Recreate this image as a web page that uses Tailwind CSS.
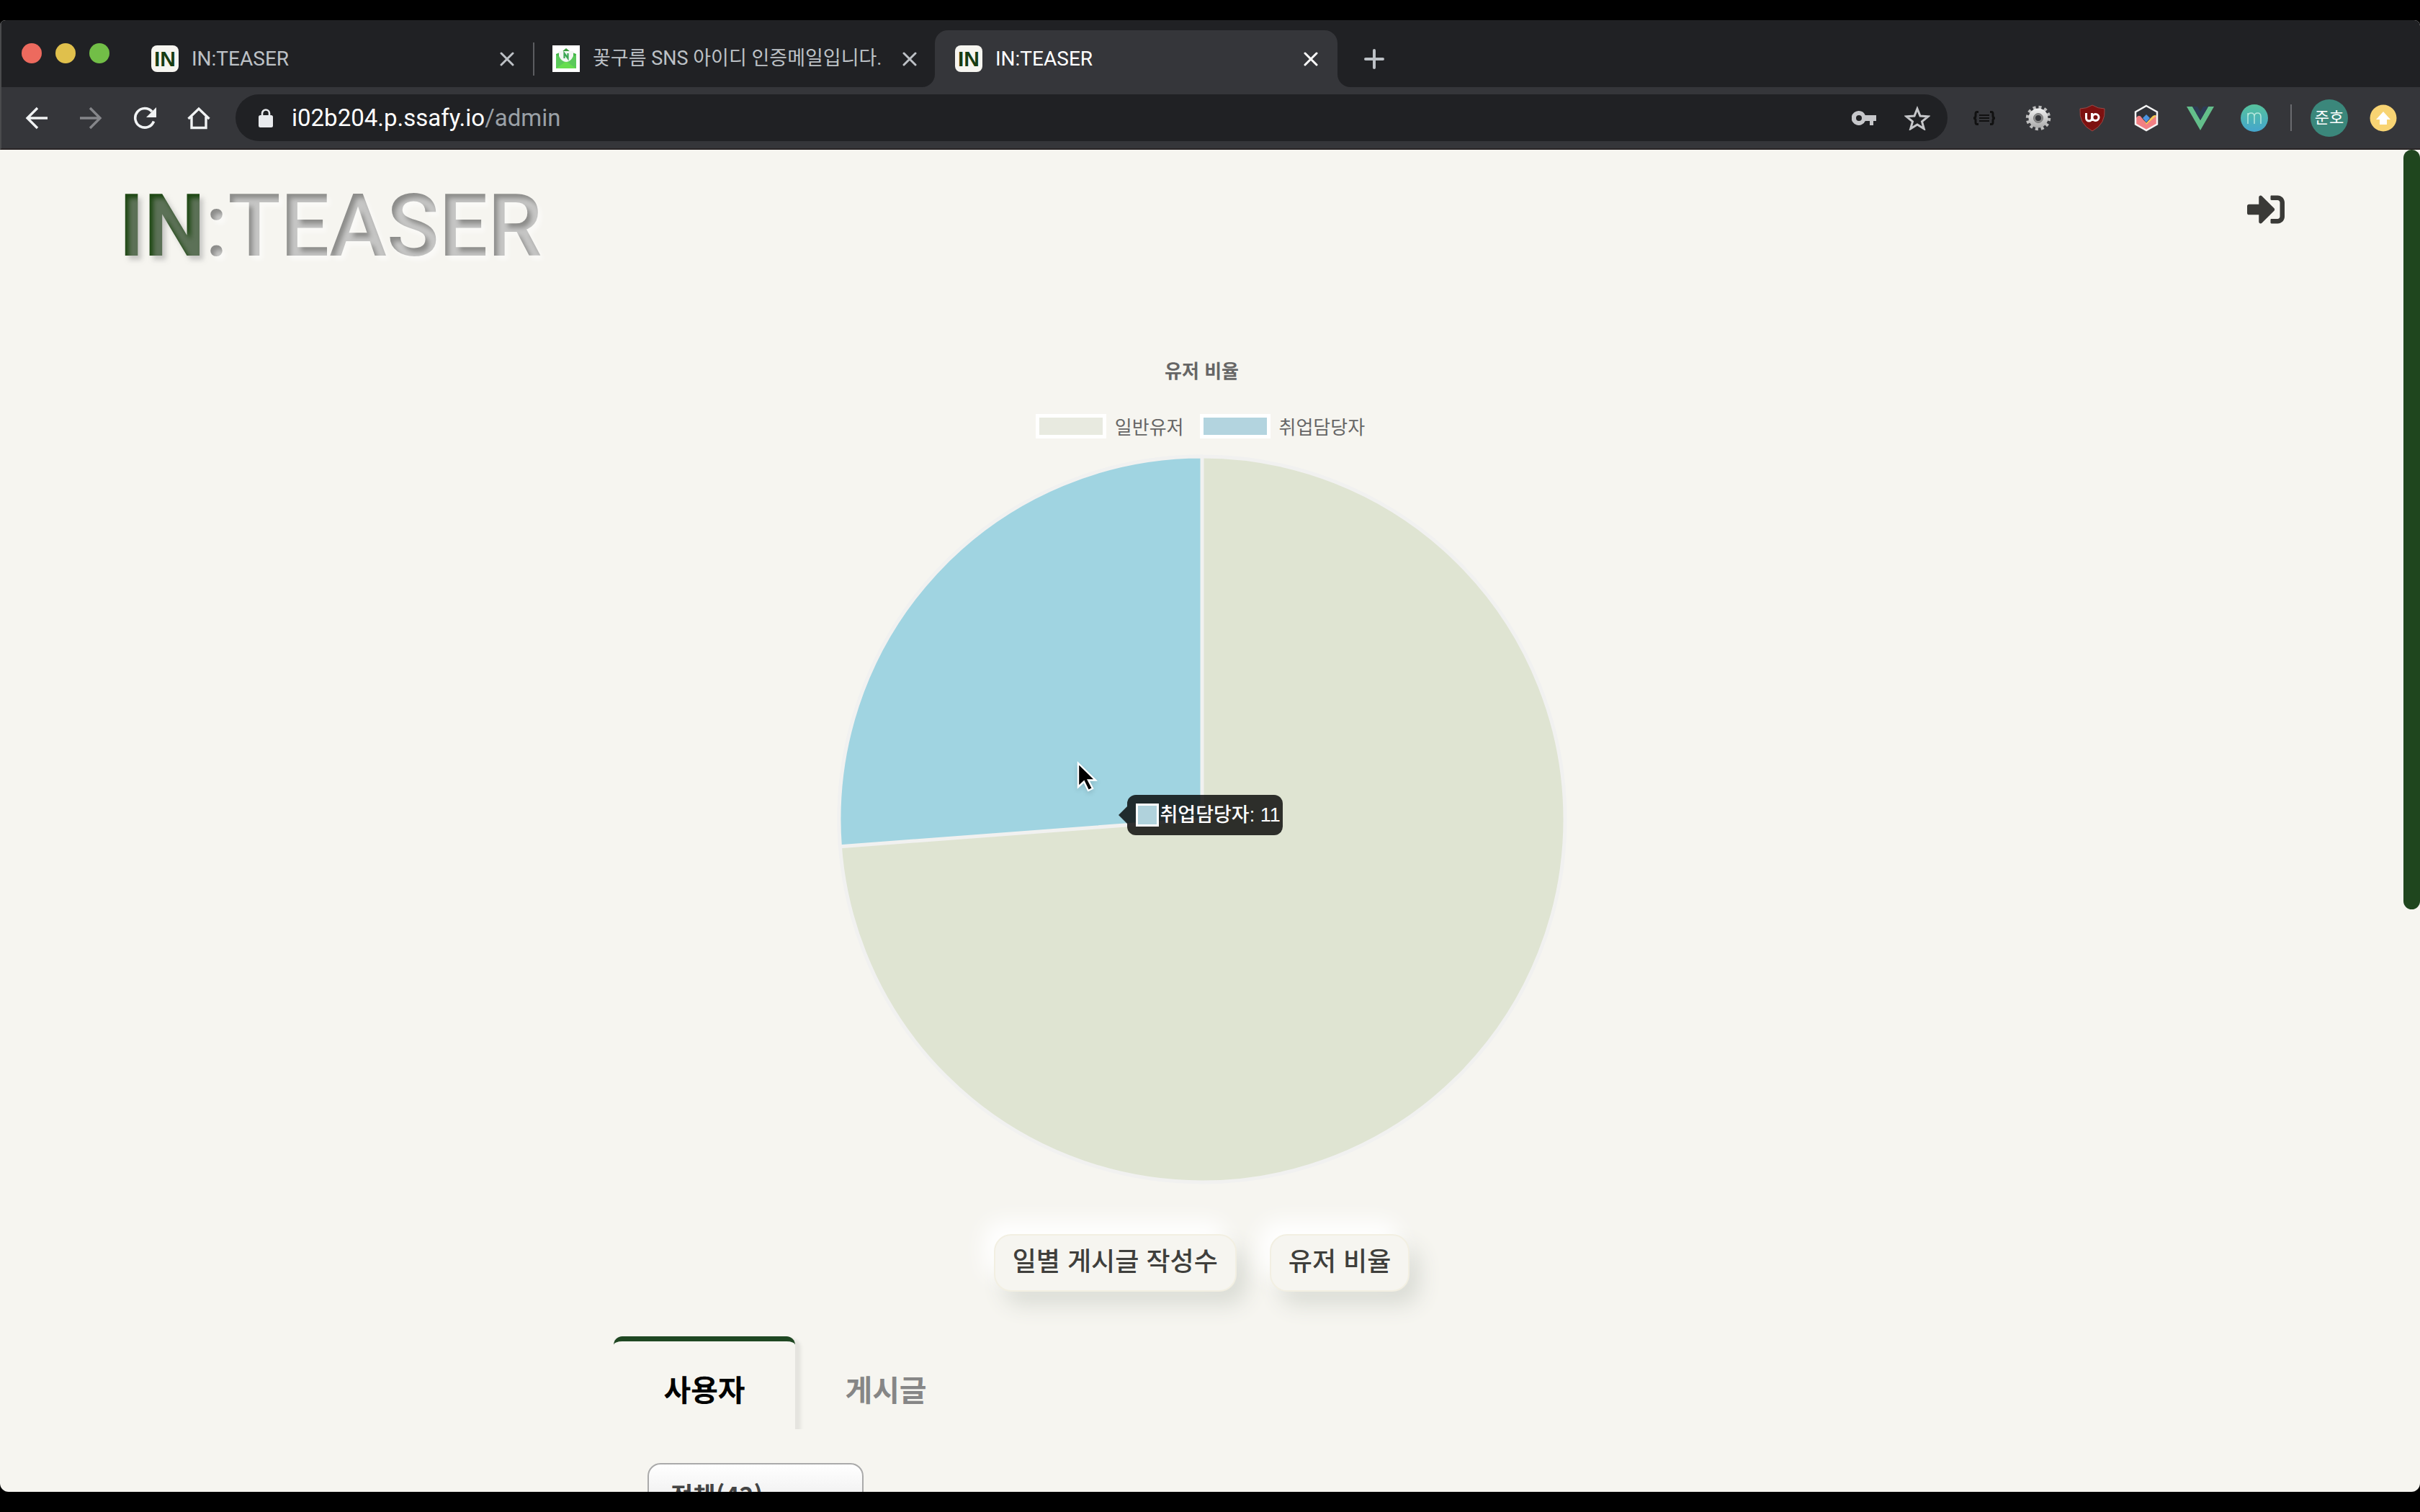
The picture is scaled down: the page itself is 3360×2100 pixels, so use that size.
<!DOCTYPE html>
<html lang="ko">
<head>
<meta charset="utf-8">
<title>IN:TEASER</title>
<script src="https://cdn.jsdelivr.net/npm/@tailwindcss/browser@4"></script>
</head>
<body class="bg-black font-['Roboto','Noto_Sans_CJK_KR',sans-serif]">
<div class="h-screen py-7">
<div class="flex h-full flex-col overflow-hidden rounded-t-lg rounded-b-xl bg-[#f6f5f0]">

  <!-- Tab strip -->
  <div class="flex h-[93px] shrink-0 items-end border-l-2 border-[#4a4b4d] bg-[#202124]">
    <div class="flex h-[95px] items-center gap-[19px] pl-7">
      <button aria-label="닫기" class="size-7 rounded-full bg-[#ed6a5e]"></button>
      <button aria-label="최소화" class="size-7 rounded-full bg-[#e0c04c]"></button>
      <button aria-label="최대화" class="size-7 rounded-full bg-[#72be47]"></button>
    </div>
    <div class="ml-[58px] flex h-[79px] w-[532px] items-center text-[28px] text-[#bdc1c6]">
      <span class="flex h-[37px] w-[38px] shrink-0 items-center justify-center rounded-lg bg-[#f6f5f0] font-['Liberation_Sans',sans-serif] text-3xl font-bold text-[#163c12]">IN</span>
      <a href="#" class="ml-[18px] flex-1">IN:TEASER</a>
      <button aria-label="탭 닫기" class="mr-[26px]"><svg class="size-5" viewBox="0 0 20 20" stroke="currentColor" stroke-width="3" stroke-linecap="round"><path d="M2 2 18 18M18 2 2 18"/></svg></button>
      <span class="h-[46px] w-[2px] bg-[#5b5c60]"></span>
    </div>
    <div class="flex h-[79px] w-[556px] items-center pl-[25px] text-[27px] text-[#bdc1c6]">
      <svg class="h-[37px] w-[38px] shrink-0" viewBox="0 0 38 37"><path fill="#fff" d="M0 0h38v37H0z"/><path fill="#3a9b3c" d="m19 4 6 5v5H13V9z"/><path fill="#45b649" d="m5 12 5-2h18l5 2v20H5z"/><path fill="#5ac95a" d="m5 13 14 10L5 32zM33 13 19 23l14 9z"/><path fill="#66dd4e" d="m5 32 14-10 14 10z"/><path fill="#f3f6f3" d="M9 8h20v7q-4 8-10 8T9 15z"/><path fill="none" stroke="#3ba653" stroke-width="2.200" d="M16.500 18v-7l5 7v-7"/></svg>
      <a href="#" class="ml-[18px] flex-1 whitespace-nowrap">꽃구름 SNS 아이디 인증메일입니다.</a>
      <button aria-label="탭 닫기" class="mr-[25px]"><svg class="size-5" viewBox="0 0 20 20" stroke="currentColor" stroke-width="3" stroke-linecap="round"><path d="M2 2 18 18M18 2 2 18"/></svg></button>
    </div>
    <div class="relative flex h-[79px] w-[559px] items-center rounded-t-[18px] bg-[#35363a] pr-[27px] pl-7 text-[28px] text-white">
      <svg class="absolute bottom-0 -left-[18px] size-[18px]" viewBox="0 0 18 18"><path fill="#35363a" d="M18 0v18H0A18 18 0 0 0 18 0z"/></svg>
      <svg class="absolute -right-[18px] bottom-0 size-[18px]" viewBox="0 0 18 18"><path fill="#35363a" d="M0 0v18h18A18 18 0 0 1 0 0z"/></svg>
      <span class="flex h-[37px] w-[38px] shrink-0 items-center justify-center rounded-lg bg-[#f6f5f0] font-['Liberation_Sans',sans-serif] text-3xl font-bold text-[#163c12]">IN</span>
      <a href="#" class="ml-[18px] flex-1">IN:TEASER</a>
      <button aria-label="탭 닫기"><svg class="size-5" viewBox="0 0 20 20" stroke="currentColor" stroke-width="3" stroke-linecap="round"><path d="M2 2 18 18M18 2 2 18"/></svg></button>
    </div>
    <button aria-label="새 탭" class="ml-[37px] flex h-[79px] items-center text-[#bdc1c6]"><svg class="size-7" viewBox="0 0 28 28" stroke="currentColor" stroke-width="4" stroke-linecap="round"><path d="M14 2v24M2 14h24"/></svg></button>
  </div>

  <!-- Toolbar -->
  <div class="flex h-[87px] shrink-0 items-center border-b-2 border-l-2 border-b-[#2a2627] border-l-[#4a4b4d] bg-[#35363a] pr-8 pl-[33px] text-[#f1f3f4]">
    <div class="flex gap-[43px]">
      <button aria-label="뒤로"><svg class="size-8" viewBox="0 0 32 32" fill="none" stroke="currentColor" stroke-width="3.400"><path d="M31 16H4M17 2 3 16l14 14"/></svg></button>
      <button aria-label="앞으로" class="text-[#85868a]"><svg class="size-8" viewBox="0 0 32 32" fill="none" stroke="currentColor" stroke-width="3.400"><path d="M1 16h27M15 2l14 14-14 14"/></svg></button>
      <button aria-label="새로고침"><svg class="size-8" viewBox="0 0 32 32"><path fill="none" stroke="currentColor" stroke-width="3.600" d="M28.500 20.500A13.300 13.300 0 1 1 26 7"/><path fill="currentColor" d="M32 1v14H18z"/></svg></button>
      <button aria-label="홈"><svg class="size-8" viewBox="0 0 32 32" fill="none" stroke="currentColor" stroke-width="3.400"><path d="M1.500 17 16 3l14.500 14M6 14v15.500h20V14"/></svg></button>
    </div>
    <div class="ml-[35px] flex h-[65px] flex-1 items-center rounded-full bg-[#202124] pr-6 pl-8">
      <svg class="h-[26px] w-5" viewBox="0 0 20 26"><rect y="9" width="20" height="17" rx="2.500" fill="#e8eaed"/><path fill="none" stroke="#e8eaed" stroke-width="2.600" d="M5 10V6.500a5 5 0 0 1 10 0V10"/></svg>
      <a href="#" class="ml-[26px] flex-1 text-[33px] text-[#9aa0a6]"><span class="text-white">i02b204.p.ssafy.io</span>/admin</a>
      <button aria-label="비밀번호" class="text-[#c6c7ca]"><svg class="h-5 w-[34px]" viewBox="0 0 34 20"><path fill="currentColor" fill-rule="evenodd" d="M10 0a10 10 0 1 0 8.800 14H25v6h5v-6h4V6H18.800A10 10 0 0 0 10 0zm0 6a4 4 0 1 1 0 8 4 4 0 0 1 0-8z"/></svg></button>
      <button aria-label="북마크" class="ml-[39px] text-[#c6c7ca]"><svg class="h-[34px] w-9" viewBox="0 0 36 34"><path fill="none" stroke="currentColor" stroke-width="3" d="m18 4 4 10 11 .8-8.500 7 2.800 10L18 26l-9.300 5.800 2.800-10L3 14.800l11-.8z"/></svg></button>
    </div>
    <div class="ml-8 flex items-center gap-[37px]">
      <button aria-label="JSON 뷰어" class="flex size-[38px] items-center justify-center text-[#111]"><svg class="h-5 w-8" viewBox="0 0 32 20" fill="none" stroke="currentColor" stroke-width="3"><path d="M8 1.500H6Q4 1.500 4 4v3q0 3-3 3 3 0 3 3v3q0 2.500 2 2.500h2M24 1.500h2q2 0 2 2.500v3q0 3 3 3-3 0-3 3v3q0 2.500-2 2.500h-2"/><path stroke-width="2" d="M9 6h14M9 10h14M9 14h14"/></svg></button>
      <button aria-label="설정 확장"><svg class="size-[38px]" viewBox="0 0 38 38"><defs><linearGradient id="gear" x2="0" y2="1"><stop stop-color="#f2f2f2"/><stop offset="1" stop-color="#aaa"/></linearGradient></defs><circle cx="19" cy="19" r="15" fill="none" stroke="#bdbdbd" stroke-width="4.500" stroke-dasharray="4 3.854"/><circle cx="19" cy="19" r="13.500" fill="url(#gear)"/><circle cx="19" cy="19" r="6.500" fill="#8b8b8b" stroke="#777"/><circle cx="19" cy="19" r="4" fill="#35363a"/></svg></button>
      <button aria-label="uBlock"><svg class="size-[38px]" viewBox="0 0 38 38"><path fill="#7d1110" stroke="#9b4a47" d="M19 1q8 5 17 5 2 21-17 31Q0 27 2 6q9 0 17-5z"/><path fill="none" stroke="#fff" stroke-width="3" d="M10.500 12v7a4 4 0 0 0 8 0v-7m0 4v7"/><circle cx="23.500" cy="18" r="4.500" fill="none" stroke="#fff" stroke-width="3"/></svg></button>
      <button aria-label="차트 확장"><svg class="size-[38px]" viewBox="0 0 38 38"><path fill="#303238" d="m19 2 15 8.500v17L19 36 4 27.500v-17z"/><path fill="#f27f83" d="M4 20q5-8 9-1l6 7 6-7q5-5 9-3v11.500L19 36 4 27.500z"/><path fill="#4b93e0" d="m14 19 5-5 5 5-5 6z"/><path fill="#f4c954" d="m16 22 3 4 9-10q4-2 5 0l-5 4-9 8z"/><path fill="none" stroke="#f4f4f4" stroke-width="2.500" d="m19 2 15 8.500v17L19 36 4 27.500v-17z"/></svg></button>
      <button aria-label="Vue"><svg class="size-[38px]" viewBox="0 0 38 38"><path fill="#63be8b" d="M0 3h8l11 19L30 3h8L19 36z"/><path fill="#2d3a55" d="M8 3h7l4 7 4-7h7L19 22z"/></svg></button>
      <button aria-label="m 확장" class="flex size-[38px] items-center justify-center rounded-full bg-linear-to-b from-[#57c29b] to-[#45a5cd]"><svg class="h-4 w-5" viewBox="0 0 20 16" fill="none" stroke="#b5e7dc" stroke-width="1.500"><path d="M1 16V1m0 5q0-5 4.500-5T10 6v10M10 6q0-5 4.500-5T19 6v10"/></svg></button>
    </div>
    <span class="ml-[31px] h-[37px] w-[2px] bg-[#6a6b6f]"></span>
    <button class="ml-[26px] flex size-[52px] items-center justify-center rounded-full bg-[#3b877b] text-[22px] text-white">준호</button>
    <button aria-label="업데이트" class="ml-[30px]"><svg class="size-[38px]" viewBox="0 0 38 38"><circle cx="19" cy="19" r="18.500" fill="#f8d473"/><path fill="#fff" d="m19 10 10 11h-5v7H14v-7H9z"/></svg></button>
  </div>

  <!-- Page -->
  <div class="flex min-h-0 flex-1 overflow-hidden font-['Noto_Sans_CJK_KR',sans-serif]">
    <main class="min-w-0 flex-1">
      <header class="flex h-[280px] items-start justify-between pr-[165px] pl-[165px]">
        <a href="#" class="mt-4 flex font-['Roboto',sans-serif] text-[120px] leading-[180px] text-transparent">
          <span class="bg-[#1d4712] bg-clip-text font-bold [text-shadow:5px_6px_6px_rgba(156,156,156,0.5)]">IN</span><span class="bg-[#8c8c8a] bg-clip-text font-medium [text-shadow:5px_6px_6px_rgba(255,255,255,0.5)]">:TEASER</span>
        </a>
        <button aria-label="로그아웃" class="mt-[57px] text-[#3a3a37]"><svg class="size-[52px]" viewBox="0 0 512 512" fill="currentColor"><path d="M416 448h-84c-6.600 0-12-5.400-12-12v-40c0-6.600 5.400-12 12-12h84c17.700 0 32-14.300 32-32V160c0-17.700-14.300-32-32-32h-84c-6.600 0-12-5.400-12-12V76c0-6.600 5.400-12 12-12h84c53 0 96 43 96 96v192c0 53-43 96-96 96zm-47-209L201 71c-15-15-41-4.500-41 17v96H24c-13.300 0-24 10.700-24 24v96c0 13.300 10.700 24 24 24h136v96c0 21.500 26 32 41 17l168-168c9.300-9.400 9.300-24.600 0-34z"/></svg></button>
      </header>

      <section class="flex flex-col items-center text-[26px] leading-10 text-[#666]">
        <h2 class="mt-[6px] font-bold">유저 비율</h2>
        <div class="mt-[38px] flex items-center pr-1">
          <span class="h-[34px] w-[98px] border-5 border-white bg-[#e8eae0]"></span>
          <span class="ml-3">일반유저</span>
          <span class="ml-[22px] h-[34px] w-[98px] border-5 border-white bg-[#b3d4df]"></span>
          <span class="ml-3">취업담당자</span>
        </div>
        <div class="relative mt-[19px]">
          <svg class="size-[1014px]" viewBox="0 0 1014 1014" role="img" aria-label="유저 비율">
            <circle cx="507" cy="507" r="504" fill="#dfe4d2" stroke="#f1f1f0" stroke-width="5"/>
            <path fill="#a0d4e1" stroke="#f1f1f0" stroke-width="5" d="M507 507V3A504 504 0 0 0 4.400 544.700z"/>
          </svg>
          <div class="absolute top-[473px] left-[403px] flex h-14 items-center rounded-xl bg-black/80 pr-[3px] pl-3 whitespace-nowrap text-white">
            <svg class="absolute top-4 -left-3 h-6 w-3" viewBox="0 0 12 24"><path class="fill-black/80" d="M12 0v24L0 12z"/></svg>
            <span class="mr-[2px] size-8 border-3 border-white bg-[#b0d2dc]"></span>
            <span class="font-['Liberation_Sans','Noto_Sans_CJK_KR',sans-serif] text-[27px] font-medium">취업담당자: 11</span>
          </div>
          <svg class="absolute top-[425px] left-[333px] h-12 w-8 drop-shadow-md" viewBox="0 0 32 48"><path stroke="#fff" stroke-width="2.400" d="M2 4v33l8-7.500 6 12.500 6-3-6-11.500h10z"/></svg>
        </div>
        <div class="mt-[69px] flex gap-[46px] text-[36px] leading-[52px] font-medium text-[#3f3f3c]">
          <button class="h-20 rounded-3xl border-2 border-[#f2efe2] bg-[#f6f5f0] px-6 pb-[10px] shadow-[-14px_-18px_30px_#ffffff,14px_18px_30px_#dadcd5]">일별 게시글 작성수</button>
          <button class="h-20 rounded-3xl border-2 border-[#f2efe2] bg-[#f6f5f0] px-6 pb-[10px] shadow-[-14px_-18px_30px_#ffffff,14px_18px_30px_#dadcd5]">유저 비율</button>
        </div>
      </section>

      <section class="mt-[62px] ml-[852px] w-[1634px]">
        <div class="flex overflow-hidden text-[41px] leading-[60px] font-bold">
          <button class="h-[129px] w-[252px] rounded-t-xl border-t-7 border-[#1f4722] pt-2 text-black shadow-[8px_4px_4px_#e5e4df,-2px_0_2px_#f0efea]">사용자</button>
          <button class="h-[129px] w-[252px] pt-[15px] text-[#868686]">게시글</button>
        </div>
        <select aria-label="사용자 구분" class="mt-[47px] ml-[47px] h-[86px] w-[300px] appearance-none rounded-[18px] border-2 border-[#aaa] bg-linear-to-b from-white to-[#e5e5e5] pl-[30px] text-[34px] font-bold text-[#444]">
          <option>전체(42)</option>
        </select>
      </section>
    </main>
    <div class="w-[23px] shrink-0"><div class="h-[1055px] rounded-full bg-[#1f461e]"></div></div>
  </div>
</div>
</div>
</body>
</html>
